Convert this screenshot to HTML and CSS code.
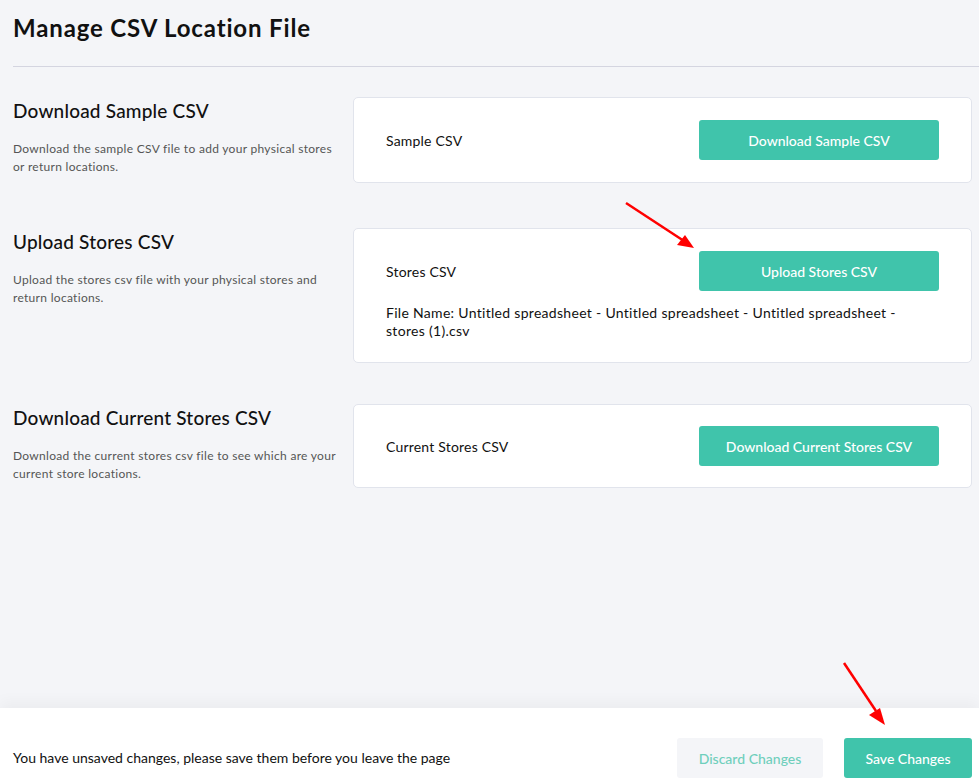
FILE: index.html
```html
<!DOCTYPE html>
<html lang="en">
<head>
  <meta charset="UTF-8">
  <meta name="viewport" content="width=device-width, initial-scale=1.0">
  <title>Manage CSV Location File</title>
  <link rel="stylesheet" href="styles.css">
</head>
<body>
  <div class="page">
    <h1 class="page-title">Manage CSV Location File</h1>
    <hr class="divider">

    <div class="section">
      <div class="section-info">
        <h2>Download Sample CSV</h2>
        <p>Download the sample CSV file to add your physical stores or return locations.</p>
      </div>
      <div class="card">
        <div class="card-row">
          <span class="card-label">Sample CSV</span>
          <button class="btn btn-primary">Download Sample CSV</button>
        </div>
      </div>
    </div>

    <div class="section section-tight">
      <div class="section-info">
        <h2>Upload Stores CSV</h2>
        <p>Upload the stores csv file with your physical stores and return locations.</p>
      </div>
      <div class="card">
        <div class="card-row">
          <span class="card-label">Stores CSV</span>
          <button class="btn btn-primary">Upload Stores CSV</button>
        </div>
        <div class="file-name">File Name: Untitled spreadsheet - Untitled spreadsheet - Untitled spreadsheet - stores (1).csv</div>
      </div>
    </div>

    <div class="section">
      <div class="section-info">
        <h2>Download Current Stores CSV</h2>
        <p>Download the current stores csv file to see which are your current store locations.</p>
      </div>
      <div class="card card-last">
        <div class="card-row">
          <span class="card-label">Current Stores CSV</span>
          <button class="btn btn-primary">Download Current Stores CSV</button>
        </div>
      </div>
    </div>
  </div>

  <div class="save-bar">
    <span class="save-msg">You have unsaved changes, please save them before you leave the page</span>
    <div class="save-actions">
      <button class="btn btn-light">Discard Changes</button>
      <button class="btn btn-primary btn-save">Save Changes</button>
    </div>
  </div>

  <svg class="arrow arrow-upload" width="80" height="60" viewBox="0 0 80 60">
    <line x1="4" y1="4" x2="62" y2="42" stroke="#f00" stroke-width="2.5"/>
    <polygon points="72,49 55,46 63,36" fill="#f00"/>
  </svg>
  <svg class="arrow arrow-save" width="60" height="80" viewBox="0 0 60 80">
    <line x1="4" y1="4" x2="36" y2="52" stroke="#f00" stroke-width="2.5"/>
    <polygon points="45,66 29,56 40,49" fill="#f00"/>
  </svg>
</body>
</html>
```

FILE: styles.css
```css
body {
  margin: 0;
  background: #f4f5f8;
  font-family: Lato, "Noto Sans", sans-serif;
  color: #111;
  height: 780px;
  overflow: hidden;
  position: relative;
}
.page {
  padding: 13px 7px 0 13px;
}
.page-title {
  font-size: 24px;
  font-weight: 700;
  margin: 0;
  line-height: 30px;
  letter-spacing: 0.85px;
}
.divider {
  border: 0;
  border-top: 1px solid #d4d5e0;
  margin: 23px -7px 30px 0;
}
.section {
  display: flex;
  align-items: flex-start;
  margin-bottom: 45px;
}
.section-tight {
  margin-bottom: 41px;
}
.section-info {
  width: 340px;
  flex-shrink: 0;
}
.section-info h2 {
  font-size: 19px;
  font-weight: 500;
  margin: 2px 0 0;
  line-height: 24px;
  letter-spacing: 0.2px;
}
.section-info p {
  font-size: 12px;
  color: #555;
  line-height: 18px;
  margin: 17px 0 0;
  padding-right: 8px;
  letter-spacing: 0.3px;
}
.card {
  flex: 1;
  background: #fff;
  border: 1px solid #e1e4ec;
  border-radius: 5px;
  padding: 22px 32px 22px 32px;
}
.card-last {
  padding: 21px 32px 21px 32px;
}
.card-row {
  display: flex;
  justify-content: space-between;
  align-items: center;
}
.card-label {
  font-size: 14px;
  letter-spacing: 0.2px;
}
.btn {
  font-family: inherit;
  font-size: 14px;
  font-weight: 500;
  height: 40px;
  border: 0;
  border-radius: 3px;
  cursor: pointer;
}
.btn-primary {
  background: #40c4ab;
  color: #fff;
  width: 240px;
}
.file-name {
  font-size: 14px;
  line-height: 18px;
  margin-top: 13px;
  padding-right: 20px;
  letter-spacing: 0.3px;
}
.save-bar {
  position: absolute;
  left: 0;
  right: 0;
  top: 708px;
  height: 72px;
  background: #fff;
  box-shadow: 0 -6px 14px rgba(0, 0, 0, 0.04);
  display: flex;
  justify-content: space-between;
  align-items: flex-end;
  padding: 0 7px 2px 13px;
  box-sizing: border-box;
}
.save-msg {
  font-size: 14px;
  line-height: 40px;
}
.save-actions {
  display: flex;
  gap: 21px;
}
.btn-light {
  background: #f4f5f8;
  color: #6fcfbc;
  width: 146px;
}
.btn-save {
  width: 128px;
}
.arrow {
  position: absolute;
}
.arrow-upload {
  left: 622px;
  top: 199px;
}
.arrow-save {
  left: 840px;
  top: 659px;
}
```
